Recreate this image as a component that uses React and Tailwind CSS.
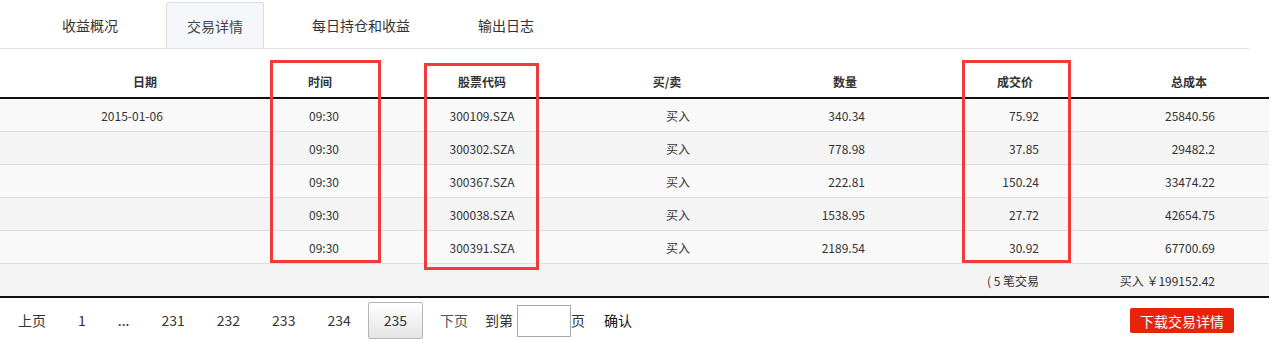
import React from "react";

// ── 탭 / 테이블 데이터
const TABS = ["收益概况", "交易详情", "每日持仓和收益", "输出日志"];

const ROWS = [
  { date: "2015-01-06", time: "09:30", code: "300109.SZA", side: "买入", qty: "340.34", price: "75.92", cost: "25840.56" },
  { date: "", time: "09:30", code: "300302.SZA", side: "买入", qty: "778.98", price: "37.85", cost: "29482.2" },
  { date: "", time: "09:30", code: "300367.SZA", side: "买入", qty: "222.81", price: "150.24", cost: "33474.22" },
  { date: "", time: "09:30", code: "300038.SZA", side: "买入", qty: "1538.95", price: "27.72", cost: "42654.75" },
  { date: "", time: "09:30", code: "300391.SZA", side: "买入", qty: "2189.54", price: "30.92", cost: "67700.69" },
];

const GRID = "grid grid-cols-[264px_120px_196px_174px_176px_170px_169px]";
const PAGES = ["1", "...", "231", "232", "233", "234"];

export default function App() {
  return (
    <div
      className="relative w-[1274px] h-[344px] bg-white text-[#333] overflow-hidden"
      style={{ fontFamily: "'Microsoft YaHei','Noto Sans CJK SC',sans-serif" }}
    >
      {/* ── 탭 바 */}
      <div className="w-[1249px] h-[49px] border-b border-[#e0e0e0] flex items-end gap-[28px] pl-[42px]">
        {TABS.map((t, i) => (
          <div
            key={t}
            className={`px-[20px] h-[46px] flex items-center text-[14px] leading-[20px] ${
              i === 1 ? "bg-[#f5f7fa] border border-b-0 border-[#dcdcdc] rounded-t-[3px] px-[19px] text-[#444]" : ""
            }`}
          >
            {t}
          </div>
        ))}
      </div>

      {/* ── 테이블 */}
      <div className="w-[1269px] text-[12px] leading-[17px]">
        <div className={`${GRID} font-bold pt-[24px] pb-[7px] border-b-2 border-[#111]`}>
          <div className="text-center pl-[26px]">日期</div>
          <div className="text-center pr-[8px]">时间</div>
          <div className="text-center">股票代码</div>
          <div className="text-center">买/卖</div>
          <div className="text-center pl-[6px]">数量</div>
          <div className="text-center">成交价</div>
          <div className="text-center pl-[9px]">总成本</div>
        </div>

        {ROWS.map((r, i) => (
          <div
            key={r.code}
            className={`${GRID} h-[33px] items-center border-b border-[#dedede] ${
              i % 2 === 0 ? "bg-[#f9f9f9]" : "bg-[#f4f4f4]"
            }`}
          >
            <div className="text-center">{r.date}</div>
            <div className="text-center">{r.time}</div>
            <div className="text-center">{r.code}</div>
            <div className="text-left pl-[86px]">{r.side}</div>
            <div className="text-right pr-[65px]">{r.qty}</div>
            <div className="text-right pr-[61px]">{r.price}</div>
            <div className="text-right pr-[54px]">{r.cost}</div>
          </div>
        ))}

        {/* 합계 */}
        <div className={`${GRID} h-[34px] items-center bg-[#f4f4f4] border-b-2 border-[#111]`}>
          <div />
          <div />
          <div />
          <div />
          <div />
          <div className="text-right pr-[61px]">( 5 笔交易</div>
          <div className="text-right pr-[54px]">买入 ￥199152.42</div>
        </div>
      </div>

      {/* ── 페이지네이션 */}
      <div className="w-[1269px] flex items-center justify-between pt-[4px] pl-[3px] pr-[35px]">
        <div className="flex items-center h-[37px] text-[14px] gap-[2px]">
          <span className="px-[15px]">上页</span>
          {PAGES.map(p => (
            <span key={p} className="px-[15px]">{p}</span>
          ))}
          <span className="h-[37px] px-[15px] flex items-center border border-[#b5b5b5] rounded-[2px] bg-gradient-to-b from-white to-[#e4e4e4]">
            235
          </span>
          <span className="px-[15px] text-[#555]">下页</span>
          <span>到第</span>
          <span className="ml-[2px] w-[54px] h-[32px] border border-[#aaa] bg-white" />
          <span className="-ml-[2px]">页</span>
          <span className="ml-[17px] text-[#111]">确认</span>
        </div>
        <button className="h-[25px] px-[10px] bg-[#e8230c] text-white text-[14px] leading-[20px] rounded-[2px]">
          下载交易详情
        </button>
      </div>

      {/* ── 빨간 강조 박스 (주석 오버레이) */}
      <div className="absolute left-[270px] top-[60px] w-[111px] h-[203px] border-[3px] border-[#f03a3c]" />
      <div className="absolute left-[424px] top-[63px] w-[115px] h-[207px] border-[3px] border-[#f03a3c]" />
      <div className="absolute left-[962px] top-[60px] w-[109px] h-[203px] border-[3px] border-[#f03a3c]" />
    </div>
  );
}
